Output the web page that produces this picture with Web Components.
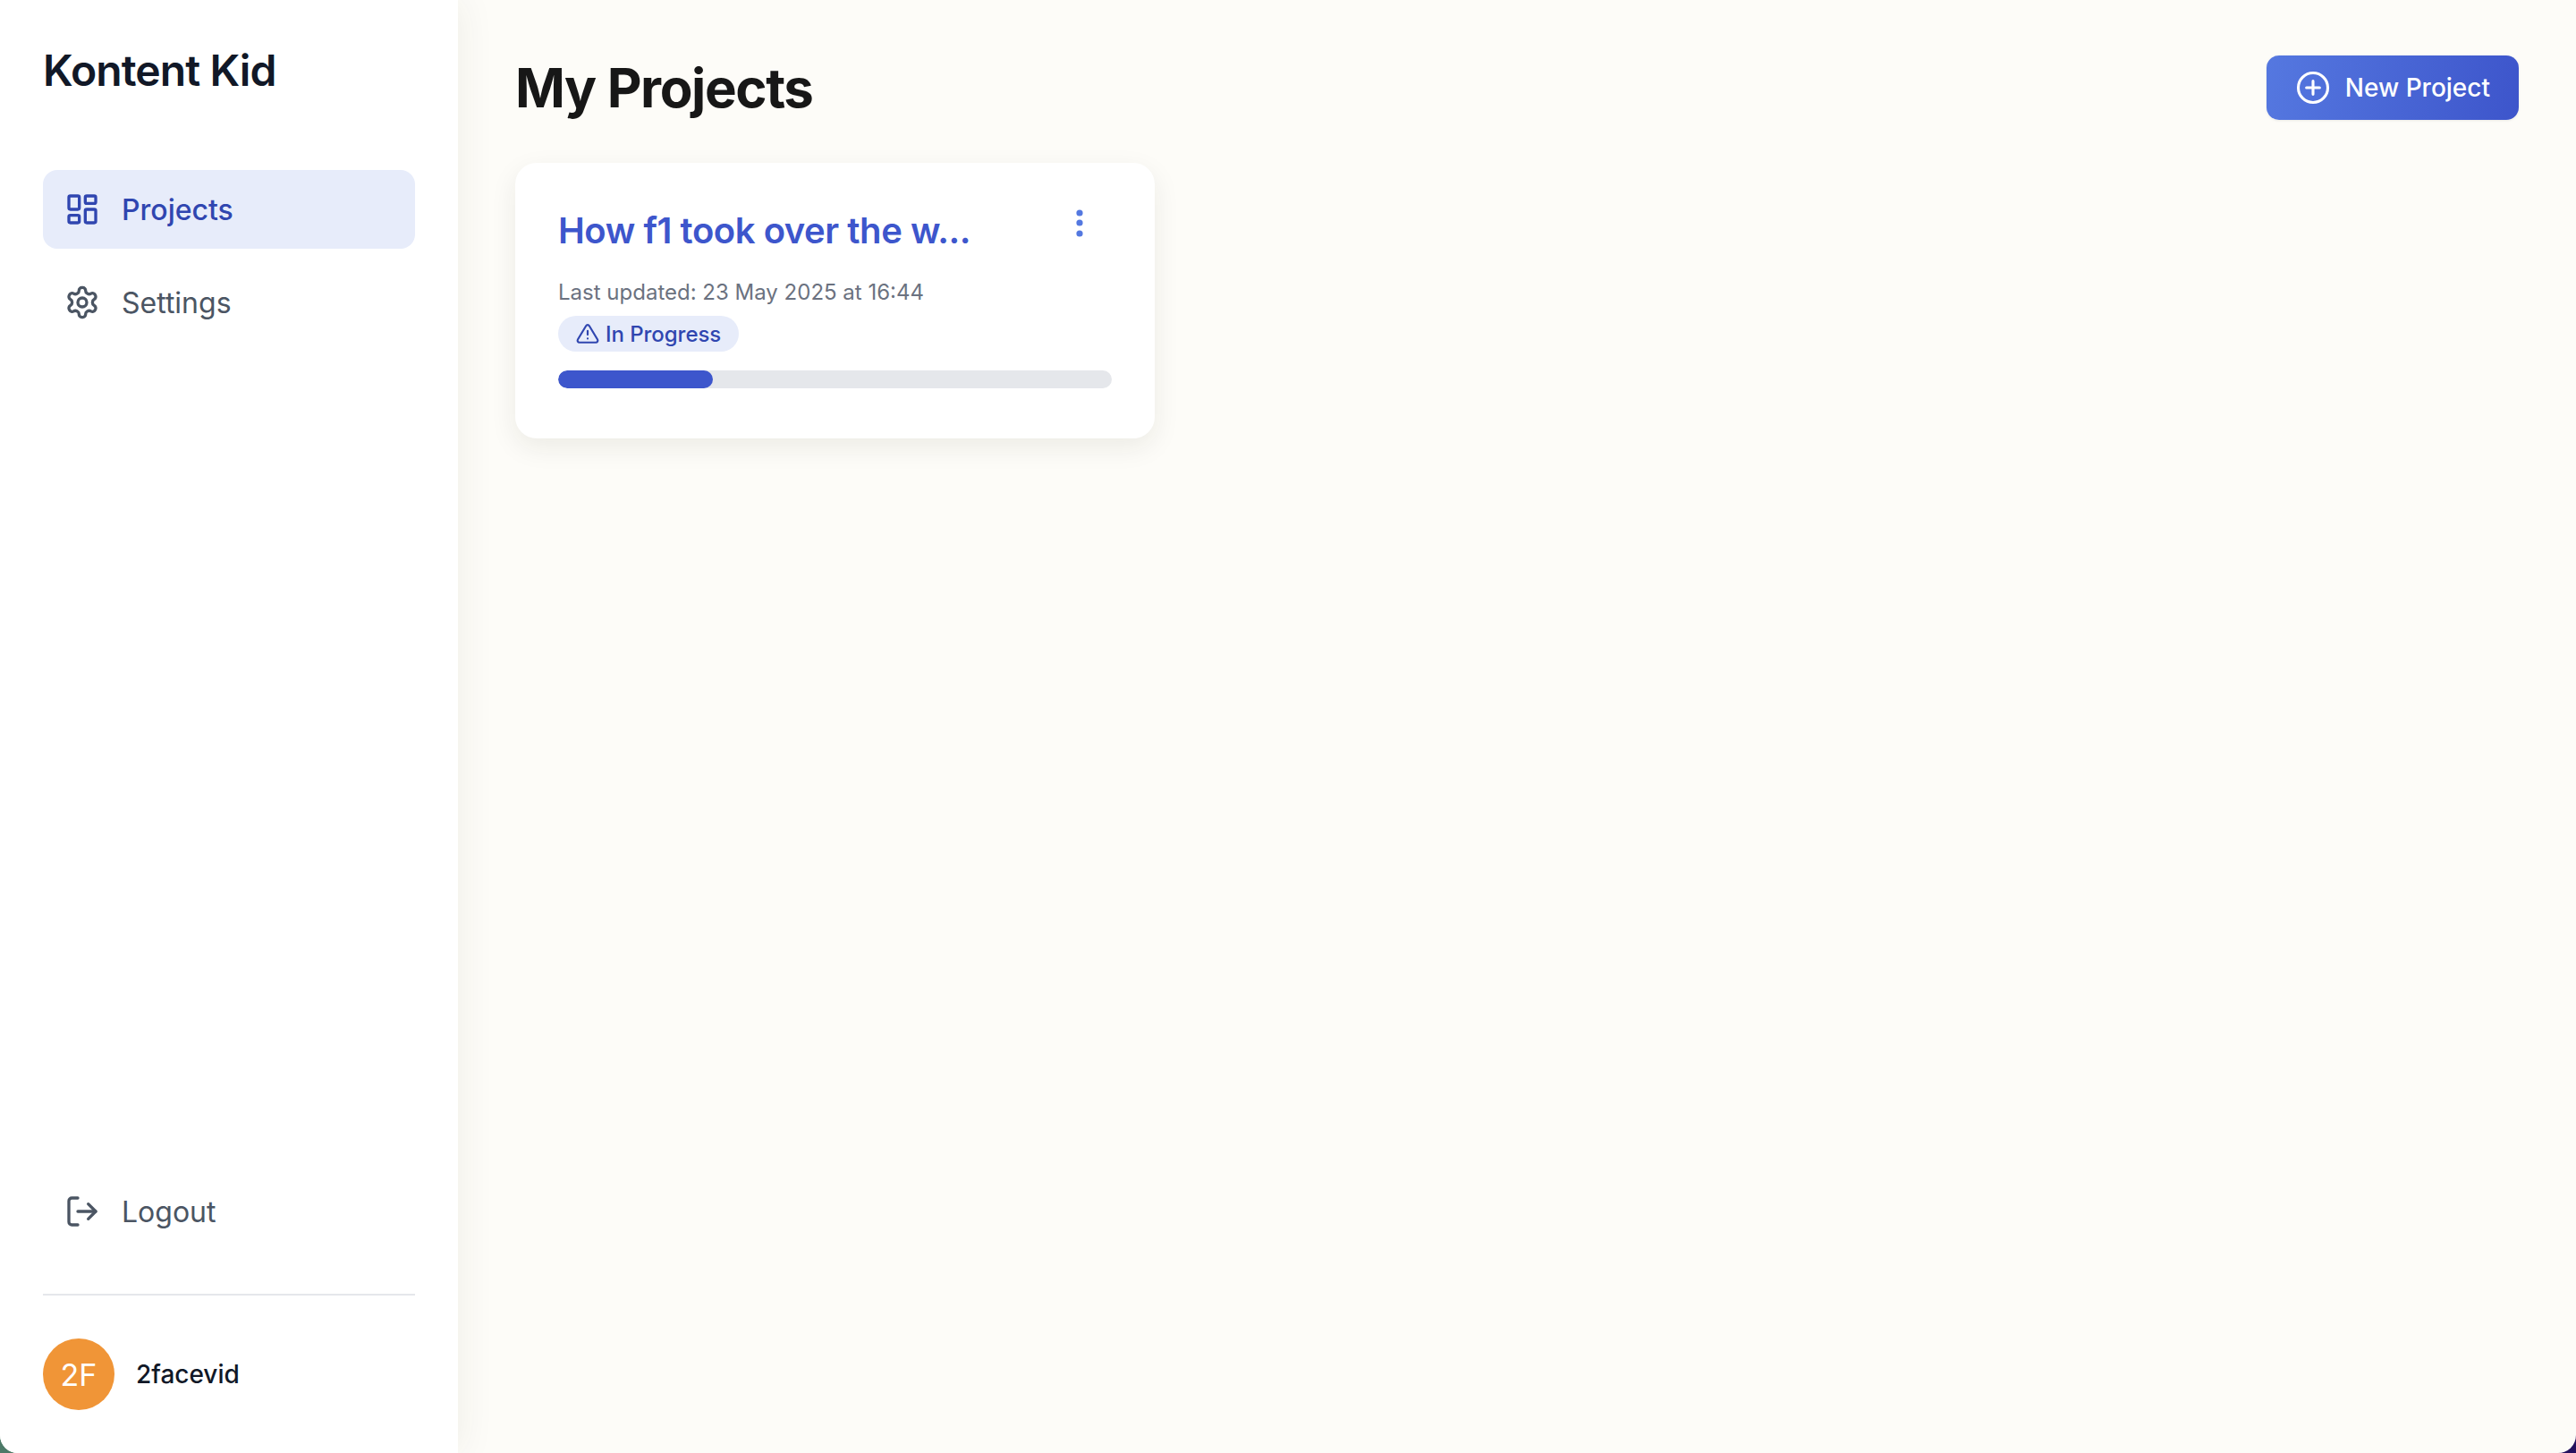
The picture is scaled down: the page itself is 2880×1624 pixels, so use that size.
<!DOCTYPE html>
<html>
<head>
<meta charset="utf-8">
<title>My Projects</title>
<style>
    html, body { margin: 0; height: 100%; }
    html { background: linear-gradient(90deg, #4d7a68 0 50%, #24125e 50% 100%); }
    body { font-family: Inter, "Liberation Sans", sans-serif; }
    app-shell { height: 1624px; }
</style>
</head>
<body>
<app-shell>
    <side-bar brand="Kontent Kid" initials="2F" username="2facevid">
        <nav-item slot="nav" icon="dashboard" active>Projects</nav-item>
        <nav-item slot="nav" icon="settings">Settings</nav-item>
        <nav-item slot="foot" icon="logout">Logout</nav-item>
    </side-bar>
    <projects-page heading="My Projects">
        <project-card title-text="How f1 took over the w..." updated="Last updated: 23 May 2025 at 16:44" status="In Progress" progress="28"></project-card>
    </projects-page>
</app-shell>

<script>
const ICONS = {
    dashboard: `<rect width="7" height="9" x="3" y="3" rx="1"/><rect width="7" height="5" x="14" y="3" rx="1"/><rect width="7" height="9" x="14" y="12" rx="1"/><rect width="7" height="5" x="3" y="16" rx="1"/>`,
    settings: `<path d="M12.22 2h-.44a2 2 0 0 0-2 2v.18a2 2 0 0 1-1 1.73l-.43.25a2 2 0 0 1-2 0l-.15-.08a2 2 0 0 0-2.73.73l-.22.38a2 2 0 0 0 .73 2.73l.15.1a2 2 0 0 1 1 1.72v.51a2 2 0 0 1-1 1.74l-.15.09a2 2 0 0 0-.73 2.73l.22.38a2 2 0 0 0 2.73.73l.15-.08a2 2 0 0 1 2 0l.43.25a2 2 0 0 1 1 1.73V20a2 2 0 0 0 2 2h.44a2 2 0 0 0 2-2v-.18a2 2 0 0 1 1-1.73l.43-.25a2 2 0 0 1 2 0l.15.08a2 2 0 0 0 2.73-.73l.22-.39a2 2 0 0 0-.73-2.73l-.15-.08a2 2 0 0 1-1-1.74v-.5a2 2 0 0 1 1-1.74l.15-.09a2 2 0 0 0 .73-2.73l-.22-.38a2 2 0 0 0-2.73-.73l-.15.08a2 2 0 0 1-2 0l-.43-.25a2 2 0 0 1-1-1.73V4a2 2 0 0 0-2-2z"/><circle cx="12" cy="12" r="3"/>`,
    logout: `<path d="M9 21H5a2 2 0 0 1-2-2V5a2 2 0 0 1 2-2h4"/><path d="M16 17l5-5-5-5"/><path d="M21 12H9"/>`
};

class AppShell extends HTMLElement {
    constructor() {
        super();
        this.attachShadow({mode: "open"});
        this.shadowRoot.innerHTML = `
        <style>
            :host { display: flex; border-radius: 0 0 20px 20px; overflow: hidden; background: #fdfcf8; }
            ::slotted(side-bar) { flex: none; }
            ::slotted(projects-page) { flex: 1; min-width: 0; }
        </style>
        <slot></slot>
        `;
    }
}

class SideBar extends HTMLElement {
    constructor() {
        super();
        this.attachShadow({mode: "open"});
    }

    connectedCallback() {
        this.shadowRoot.innerHTML = `
        <style>
            :host {
                display: flex;
                flex-direction: column;
                width: 512px;
                box-sizing: border-box;
                padding: 48px;
                background: #fff;
                box-shadow: 2px 0 40px rgba(60, 50, 20, .07);
                position: relative;
            }
            h2 { margin: 0 0 80px; font-size: 48px; line-height: 62px; font-weight: 600; color: #111827; letter-spacing: -.9px; }
            .nav { display: flex; flex-direction: column; gap: 16px; flex: 1; }
            .foot { display: flex; flex-direction: column; padding-bottom: 48px; border-bottom: 2px solid #e5e7eb; }
            .user { display: flex; align-items: center; gap: 24px; padding-top: 48px; }
            .avatar {
                width: 80px; height: 80px; border-radius: 50%;
                background: #f09537; color: #fff;
                display: flex; align-items: center; justify-content: center;
                font-size: 34px;
            }
            .name { font-size: 28px; font-weight: 500; color: #111827; }
        </style>
        <h2>${this.getAttribute("brand")}</h2>
        <div class="nav"><slot name="nav"></slot></div>
        <div class="foot"><slot name="foot"></slot></div>
        <div class="user">
            <div class="avatar">${this.getAttribute("initials")}</div>
            <div class="name">${this.getAttribute("username")}</div>
        </div>
        `;
    }
}

class NavItem extends HTMLElement {
    constructor() {
        super();
        this.attachShadow({mode: "open"});
    }

    connectedCallback() {
        this.shadowRoot.innerHTML = `
        <style>
            :host {
                display: flex;
                align-items: center;
                gap: 24px;
                height: 88px;
                padding: 0 24px;
                border-radius: 16px;
                font-size: 32px;
                color: #4b5563;
            }
            :host([active]) { background: #e7ecfa; color: #3046b0; font-weight: 500; }
            svg { width: 40px; height: 40px; flex: none; fill: none; stroke: currentColor; stroke-width: 2; stroke-linecap: round; stroke-linejoin: round; }
        </style>
        <svg viewBox="0 0 24 24">${ICONS[this.getAttribute("icon")]}</svg>
        <slot></slot>
        `;
    }
}

class ProjectsPage extends HTMLElement {
    constructor() {
        super();
        this.attachShadow({mode: "open"});
    }

    connectedCallback() {
        this.shadowRoot.innerHTML = `
        <style>
            :host { display: block; padding: 62px 64px 0; }
            header { display: flex; justify-content: space-between; align-items: center; margin-bottom: 48px; }
            h1 { margin: 0; font-size: 60px; line-height: 72px; font-weight: 700; color: #171717; letter-spacing: -1.4px; }
            button {
                display: flex; align-items: center; gap: 12px;
                height: 72px; padding: 0 32px;
                border: 0; border-radius: 14px;
                background: linear-gradient(100deg, #5578e0, #3d55cb);
                box-shadow: 0 1px 3px rgba(0, 0, 0, .08);
                color: #fff; font: 450 28px Inter, "Liberation Sans", sans-serif;
            }
            button svg { width: 44px; height: 44px; margin: 0 2px 0 -2px; fill: none; stroke: #fff; stroke-width: 1.7; stroke-linecap: round; stroke-linejoin: round; }
            .grid { display: grid; grid-template-columns: repeat(3, 1fr); gap: 48px; }
        </style>
        <header>
            <h1>${this.getAttribute("heading")}</h1>
            <button><svg viewBox="0 0 24 24"><circle cx="12" cy="12" r="9"/><path d="M12 8v8M8 12h8"/></svg>New Project</button>
        </header>
        <div class="grid"><slot></slot></div>
        `;
    }
}

class ProjectCard extends HTMLElement {
    constructor() {
        super();
        this.attachShadow({mode: "open"});
    }

    connectedCallback() {
        this.shadowRoot.innerHTML = `
        <style>
            :host {
                display: block;
                box-sizing: border-box;
                height: 308px;
                padding: 46px 48px 48px;
                background: #fff;
                border-radius: 24px;
                box-shadow: 0 10px 30px rgba(40, 35, 10, .08);
            }
            .top { display: flex; justify-content: space-between; align-items: flex-start; height: 60px; margin-bottom: 21px; }
            h3 { margin: 0; font-size: 40px; line-height: 60px; font-weight: 600; color: #3d56cc; white-space: nowrap; letter-spacing: -.45px; }
            .more { width: 48px; height: 48px; margin: 1px 12px 0 0; fill: #5478e0; }
            .meta { font-size: 24px; line-height: 36px; color: #6b7280; }
            .badge {
                display: inline-flex; align-items: center; gap: 7px;
                height: 40px; padding: 0 20px; margin-top: 8px;
                border-radius: 20px;
                background: #e7ecfa; color: #3046b0; font-size: 24px; font-weight: 500; letter-spacing: -.05px;
            }
            .badge svg { width: 26px; height: 26px; fill: none; stroke: currentColor; stroke-width: 2; stroke-linecap: round; stroke-linejoin: round; }
            .bar { height: 20px; margin-top: 21px; border-radius: 10px; background: #e5e7eb; overflow: hidden; }
            .fill { height: 100%; border-radius: 10px; background: #3d56cc; }
        </style>
        <div class="top">
            <h3>${this.getAttribute("title-text")}</h3>
            <svg class="more" viewBox="0 0 48 48"><circle cx="24" cy="9" r="3.6"/><circle cx="24" cy="20" r="3.6"/><circle cx="24" cy="32" r="3.6"/></svg>
        </div>
        <div class="meta">${this.getAttribute("updated")}</div>
        <div class="badge">
            <svg viewBox="0 0 24 24"><path d="M10.3 3.9 1.8 18a2 2 0 0 0 1.7 3h17a2 2 0 0 0 1.7-3L13.7 3.9a2 2 0 0 0-3.4 0z"/><path d="M12 9v4M12 17h.01"/></svg>
            ${this.getAttribute("status")}
        </div>
        <div class="bar"><div class="fill" style="width:${this.getAttribute("progress")}%"></div></div>
        `;
    }
}

customElements.define("app-shell", AppShell);
customElements.define("side-bar", SideBar);
customElements.define("nav-item", NavItem);
customElements.define("projects-page", ProjectsPage);
customElements.define("project-card", ProjectCard);
</script>
</body>
</html>
